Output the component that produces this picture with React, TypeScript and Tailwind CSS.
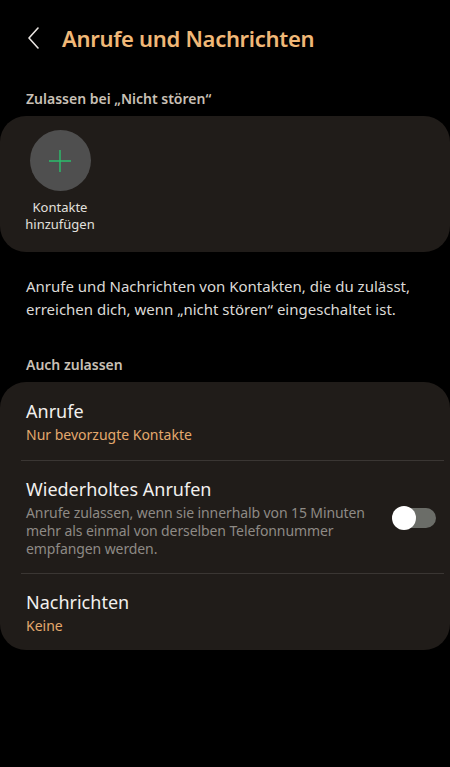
import React from "react";

const font = { fontFamily: '"Noto Sans", "Open Sans", sans-serif' };

const Row = ({
  title,
  sub,
  desc,
  toggle,
}: {
  title: string;
  sub?: string;
  desc?: string;
  toggle?: boolean;
}) => (
  <div className="flex items-center pl-[26px] pr-[14px]">
    <div className="flex-1">
      <div className="text-[18px] leading-[24px] text-[#f2f0ee]">{title}</div>
      {sub && <div className="text-[14px] leading-[20px] mt-[2px] text-[#e4a96d]">{sub}</div>}
      {desc && (
        <div className="text-[14px] leading-[18px] mt-[3px] text-[#8e8a85] tracking-[-0.1px] max-w-[352px]">
          {desc}
        </div>
      )}
    </div>
    {toggle && (
      <div className="relative w-[44px] h-[24px] shrink-0 ml-1">
        <div className="absolute left-[4px] right-0 top-[2px] bottom-[2px] rounded-full bg-[#6b6d68]" />
        <div className="absolute left-0 top-0 w-[24px] h-[24px] rounded-full bg-white" />
      </div>
    )}
  </div>
);

const Divider = () => <div className="ml-[21px] mr-[6px] h-px bg-[#3a3633]" />;

export default function App() {
  return (
    <div className="w-[450px] h-[767px] bg-black overflow-hidden" style={font}>
      <div className="flex items-center h-[38px] mt-[19px] pl-[26px]">
        <svg width="16" height="22" viewBox="0 0 16 22" fill="none">
          <path d="M12 1 L3 11 L12 21" stroke="#e8e4e0" strokeWidth="1.6" strokeLinejoin="round" strokeLinecap="round" />
        </svg>
        <h1 className="ml-[20px] text-[22px] font-semibold text-[#f0b877] tracking-[-0.3px]">
          Anrufe und Nachrichten
        </h1>
      </div>

      <div className="mt-[31px] px-[26px] text-[14px] font-semibold text-[#c9c0b6]">
        Zulassen bei „Nicht stören“
      </div>

      <div className="mt-[7px] rounded-[26px] bg-[#201c19] h-[136px] pt-[14px] pl-[26px]">
        <div className="flex flex-col items-center w-[68px]">
          <div className="w-[61px] h-[61px] rounded-full bg-[#4f4f4f] flex items-center justify-center">
            <svg width="24" height="24" viewBox="0 0 24 24">
              <path d="M12 1 V23 M1 12 H23" stroke="#2bbf6c" strokeWidth="1.4" />
            </svg>
          </div>
          <div className="mt-[8px] text-[13px] leading-[17px] text-center text-[#e2e0de] whitespace-nowrap">
            <div>Kontakte</div>
            <div>hinzufügen</div>
          </div>
        </div>
      </div>

      <div className="mt-[23px] px-[26px] text-[15px] leading-[23px] text-[#dcdad7]">
        Anrufe und Nachrichten von Kontakten, die du zulässt, erreichen dich, wenn „nicht stören“ eingeschaltet ist.
      </div>

      <div className="mt-[33px] px-[26px] text-[14px] font-semibold text-[#c9c0b6]">Auch zulassen</div>

      <div className="mt-[7px] rounded-[26px] bg-[#201c19] pt-[17px] pb-[14px]">
        <Row title="Anrufe" sub="Nur bevorzugte Kontakte" />
        <div className="mt-[15px] mb-[16px]">
          <Divider />
        </div>
        <Row
          title="Wiederholtes Anrufen"
          desc="Anrufe zulassen, wenn sie innerhalb von 15 Minuten mehr als einmal von derselben Telefonnummer empfangen werden."
          toggle
        />
        <div className="mt-[15px] mb-[16px]">
          <Divider />
        </div>
        <Row title="Nachrichten" sub="Keine" />
      </div>
    </div>
  );
}
